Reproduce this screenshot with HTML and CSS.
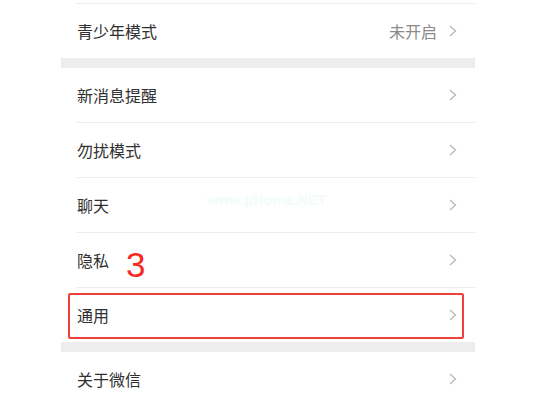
FILE: index.html
```html
<!DOCTYPE html>
<html lang="zh-CN">
<head>
    <meta charset="UTF-8">
    <meta name="viewport" content="width=device-width, initial-scale=1.0">
    <title>设置</title>
    <link rel="stylesheet" href="styles.css">
</head>
<body>

<div class="page">
    <div class="group group-cut">
        <div class="row">
            <span class="label">青少年模式</span>
            <span class="value">未开启</span>
            <svg class="arrow" width="8" height="12" viewBox="0 0 8 12"><polyline points="1,1 6.5,6 1,11"/></svg>
        </div>
    </div>

    <div class="gap"></div>

    <div class="group">
        <div class="row">
            <span class="label">新消息提醒</span>
            <svg class="arrow" width="8" height="12" viewBox="0 0 8 12"><polyline points="1,1 6.5,6 1,11"/></svg>
        </div>
        <div class="row">
            <span class="label">勿扰模式</span>
            <svg class="arrow" width="8" height="12" viewBox="0 0 8 12"><polyline points="1,1 6.5,6 1,11"/></svg>
        </div>
        <div class="row">
            <span class="label">聊天</span>
            <svg class="arrow" width="8" height="12" viewBox="0 0 8 12"><polyline points="1,1 6.5,6 1,11"/></svg>
            <span class="watermark">www.pHome.NET</span>
        </div>
        <div class="row">
            <span class="label">隐私</span>
            <svg class="arrow" width="8" height="12" viewBox="0 0 8 12"><polyline points="1,1 6.5,6 1,11"/></svg>
            <span class="step">3</span>
        </div>
        <div class="row">
            <span class="label">通用</span>
            <svg class="arrow" width="8" height="12" viewBox="0 0 8 12"><polyline points="1,1 6.5,6 1,11"/></svg>
            <span class="mark"></span>
        </div>
    </div>

    <div class="gap"></div>

    <div class="group group-open">
        <div class="row">
            <span class="label">关于微信</span>
            <svg class="arrow" width="8" height="12" viewBox="0 0 8 12"><polyline points="1,1 6.5,6 1,11"/></svg>
        </div>
    </div>
</div>

</body>
</html>
```

FILE: styles.css
```css
body {
    margin: 0;
    background: #fff;
    font-family: "Noto Sans CJK SC", "Noto Sans", sans-serif;
}
.page {
    width: 414px;
    margin-left: 61px;
}
.group {
    background: #fff;
}
.group-cut {
    padding-top: 3px;
}
.group-cut .row {
    border-top: 1px solid #ececec;
    margin-left: 15px;
    padding-left: 1px;
}
.row {
    position: relative;
    display: flex;
    align-items: center;
    height: 54px;
    padding: 0 18px 0 16px;
}
.group .row + .row::before,
.group-open .row::after {
    content: "";
    position: absolute;
    left: 15px;
    right: 0;
    height: 1px;
    background: #ececec;
}
.group .row + .row::before {
    top: -1px;
}
.group .row + .row {
    margin-top: 1px;
}
.group-open .row::after {
    bottom: -1px;
}
.label {
    flex: 1;
    font-size: 16px;
    color: #303030;
}
.value {
    font-size: 16px;
    color: #8a8a8a;
    margin-right: 12px;
}
.arrow {
    display: block;
}
.arrow polyline {
    fill: none;
    stroke: #b8b8b8;
    stroke-width: 1.3;
}
.gap {
    height: 10px;
    background: #ededed;
}
.watermark {
    position: absolute;
    left: 146px;
    top: 14px;
    font-family: "Liberation Sans", sans-serif;
    font-size: 14.5px;
    font-weight: bold;
    color: #f3fbfb;
}
.step {
    position: absolute;
    left: 65px;
    top: 14px;
    font-family: "Liberation Sans", sans-serif;
    font-size: 35px;
    line-height: 1;
    color: #f52a20;
}
.mark {
    position: absolute;
    left: 7px;
    right: 11px;
    top: 5px;
    bottom: 3px;
    border: 2px solid #f0403a;
    border-radius: 2px;
}
```
